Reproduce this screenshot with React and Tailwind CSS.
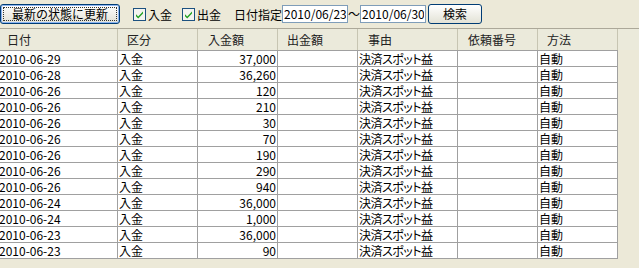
import React from 'react';

const rows = [
  { date: '2010-06-29', amount: '37,000' },
  { date: '2010-06-28', amount: '36,260' },
  { date: '2010-06-26', amount: '120' },
  { date: '2010-06-26', amount: '210' },
  { date: '2010-06-26', amount: '30' },
  { date: '2010-06-26', amount: '70' },
  { date: '2010-06-26', amount: '190' },
  { date: '2010-06-26', amount: '290' },
  { date: '2010-06-26', amount: '940' },
  { date: '2010-06-24', amount: '36,000' },
  { date: '2010-06-24', amount: '1,000' },
  { date: '2010-06-23', amount: '36,000' },
  { date: '2010-06-23', amount: '90' },
];

const columns = [
  { label: '日付', w: 'w-[120px]', pad: 'pl-[9px]' },
  { label: '区分', w: 'w-[80px]', pad: 'pl-[9px]' },
  { label: '入金額', w: 'w-[80px]', pad: 'pl-[10px]' },
  { label: '出金額', w: 'w-[80px]', pad: 'pl-[9px]' },
  { label: '事由', w: 'w-[100px]', pad: 'pl-[10px]' },
  { label: '依頼番号', w: 'w-[80px]', pad: 'pl-[10px]' },
  { label: '方法', w: 'w-[80px]', pad: 'pl-[9px]' },
];

const CheckBox = () => (
  <svg width="13" height="13" viewBox="0 0 13 13" className="shrink-0">
    <rect x="0.5" y="0.5" width="12" height="12" fill="#f4f4f0" stroke="#1c5180" />
    <path d="M3 6.2 L5.2 8.6 L10 3.6 L10 5.6 L5.2 10.6 L3 8.2 Z" fill="#21a121" />
  </svg>
);

const XpButton = ({ children, focused, className }) => (
  <button
    className={`h-[20px] rounded-[3px] border border-[#003c74] bg-gradient-to-b from-white to-[#e3e2d6] text-black leading-none ${focused ? 'shadow-[inset_0_0_0_1px_#8cb4f2]' : ''} ${className}`}
  >
    <span
      className={`flex h-full w-full items-center justify-center ${focused ? 'outline-1 outline-dotted outline-[#333] -outline-offset-[3px]' : ''}`}
    >
      {children}
    </span>
  </button>
);

const DateBox = ({ value }) => (
  <input
    readOnly
    defaultValue={value}
    className="h-[18px] w-[66px] border border-[#7f9db9] bg-white px-[1px] text-[12px] text-black outline-none"
  />
);

const App = () => {
  return (
    <div
      className="w-[639px] h-[268px] overflow-hidden bg-[#ece9d8] text-[12px] text-black"
      style={{ fontFamily: '"Noto Sans CJK JP", "Liberation Sans", sans-serif' }}
    >
      <div className="flex h-[28px] items-center pb-[1px]">
        <XpButton focused className="w-[120px]">最新の状態に更新</XpButton>
        <div className="ml-[13px] flex items-center mt-[2px]">
          <CheckBox />
          <span className="ml-[2px]">入金</span>
        </div>
        <div className="ml-[10px] flex items-center mt-[2px]">
          <CheckBox />
          <span className="ml-[2px]">出金</span>
        </div>
        <span className="ml-[13px] mt-[2px]">日付指定</span>
        <DateBox value="2010/06/23" />
        <span className="w-[12px] text-center mt-[1px]">～</span>
        <DateBox value="2010/06/30" />
        <XpButton className="ml-[2px] w-[54px]">検索</XpButton>
      </div>

      <div className="border-t border-[#aca899]">
        <div className="flex h-[21px] bg-[#ebeadb] -ml-[2px]">
          {columns.map((c) => (
            <div
              key={c.label}
              className={`${c.w} ${c.pad} flex items-center border-r border-[#c7c5b2] text-[#222]`}
            >
              {c.label}
            </div>
          ))}
          <div className="w-[20px]" />
        </div>

        <div className="border-t border-[#a0a0a0] w-[618px]">
          {rows.map((r, i) => (
            <div key={i} className="flex h-[16px] -ml-[2px] leading-[15px]">
              <div className="w-[120px] border-r border-b border-[#a0a0a0] bg-white pl-[1px]">{r.date}</div>
              <div className="w-[80px] border-r border-b border-[#a0a0a0] bg-white pl-[1px]">入金</div>
              <div className="w-[80px] border-r border-b border-[#a0a0a0] bg-white pr-[1px] text-right">{r.amount}</div>
              <div className="w-[80px] border-r border-b border-[#a0a0a0] bg-white" />
              <div className="w-[100px] border-r border-b border-[#a0a0a0] bg-white pl-[1px] tracking-[-0.5px] [font-feature-settings:'palt']">
                決済スポット益
              </div>
              <div className="w-[80px] border-r border-b border-[#a0a0a0] bg-white" />
              <div className="w-[80px] border-r border-b border-[#a0a0a0] bg-white pl-[1px]">自動</div>
            </div>
          ))}
        </div>
      </div>
    </div>
  );
};

export default App;
